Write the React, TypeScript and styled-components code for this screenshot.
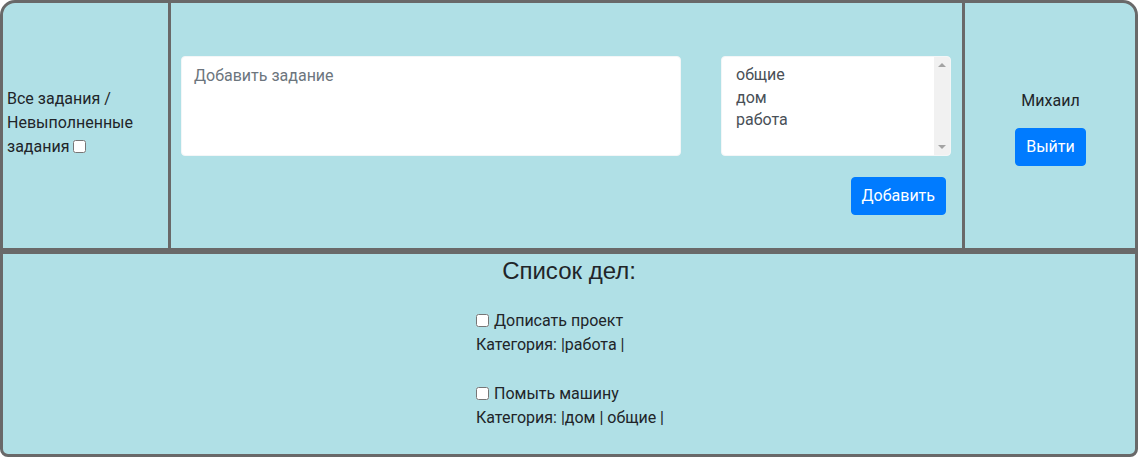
import React from "react";
import styled, { createGlobalStyle } from "styled-components";

const Global = createGlobalStyle`
  html, body { margin: 0; padding: 0; background: #fff; }
  body {
    font-family: Roboto, "Noto Sans", sans-serif;
    font-size: 16px;
    line-height: 1.5;
    color: #212529;
  }
  * { box-sizing: border-box; }
`;

const Page = styled.div`
  width: 1138px;
  display: flex;
  flex-direction: column;
`;

const Header = styled.header`
  display: grid;
  grid-template-columns: 168px 794px 173px;
  height: 251px;
  background: #b0e0e6;
  border: 3px solid #696969;
  border-radius: 15px 15px 0 0;
`;

const Column = styled.div<{ $divider?: boolean }>`
  display: flex;
  border-right: ${(p) => (p.$divider ? "3px solid #696969" : "none")};
`;

const FilterCol = styled(Column)`
  align-items: center;
  padding: 0 0 5px 4px;
`;

const FilterText = styled.label`
  display: block;
`;

const Check = styled.input.attrs({ type: "checkbox" })`
  width: 13px;
  height: 13px;
  margin: 0;
  vertical-align: -1px;
`;

const MiddleCol = styled(Column)`
  flex-direction: column;
  padding-top: 53px;
`;

const InputRow = styled.div`
  display: flex;
  justify-content: space-between;
  padding: 0 11px 0 10px;
`;

const TaskInput = styled.textarea`
  width: 500px;
  height: 100px;
  padding: 7px 12px 6px;
  border: 1px solid #f3f6f7;
  border-radius: 4px;
  background: #fff;
  font: inherit;
  color: #495057;
  resize: none;
  outline: none;
  &::placeholder { color: #6c757d; }
`;

const ListBox = styled.div`
  width: 230px;
  height: 100px;
  display: flex;
  background: #fff;
  border: 1px solid #f3f6f7;
  border-radius: 4px;
  overflow: hidden;
`;

const Options = styled.div`
  flex: 1;
  padding: 7px 0 0 14px;
  color: #495057;
`;

const Option = styled.div`
  line-height: 22.5px;
`;

const ScrollTrack = styled.div`
  width: 16px;
  background: #f1f1f1;
  display: flex;
  flex-direction: column;
  justify-content: space-between;
  align-items: center;
  padding: 6px 0;
`;

const Arrow = styled.span<{ $down?: boolean }>`
  width: 0;
  height: 0;
  border-left: 4px solid transparent;
  border-right: 4px solid transparent;
  ${(p) =>
    p.$down
      ? "border-top: 4px solid #a3a3a3;"
      : "border-bottom: 4px solid #a3a3a3;"}
`;

const ActionRow = styled.div`
  display: flex;
  justify-content: flex-end;
  padding-right: 16px;
  margin-top: 21px;
`;

const Button = styled.button`
  background: #007bff;
  color: #fff;
  border: 1px solid #007bff;
  border-radius: 4px;
  padding: 6px 10px;
  font: inherit;
  line-height: 24px;
  cursor: pointer;
`;

const UserCol = styled(Column)`
  flex-direction: column;
  align-items: center;
  justify-content: center;
  gap: 15px;
  padding: 3px 2px 0 0;
`;

const UserName = styled.div``;

const ListSection = styled.section`
  height: 206px;
  background: #b0e0e6;
  border: 3px solid #696969;
  border-radius: 0 0 8px 8px;
  display: flex;
  flex-direction: column;
  align-items: center;
  padding-top: 3px;
`;

const Title = styled.h4`
  margin: 0;
  font-family: "Liberation Sans", Arial, sans-serif;
  font-weight: 400;
  font-size: 24px;
  line-height: 1.2;
  color: #212529;
`;

const Tasks = styled.div`
  margin-top: 23px;
  display: flex;
  flex-direction: column;
  gap: 25px;
  padding-left: 2px;
`;

const Task = styled.div``;

const TaskTitle = styled.label`
  display: flex;
  align-items: center;
  gap: 5px;
`;

export default function App() {
  return (
    <>
      <Global />
      <Page>
        <Header>
          <FilterCol $divider>
            <FilterText>
              Все задания / Невыполненные задания <Check />
            </FilterText>
          </FilterCol>
          <MiddleCol $divider>
            <InputRow>
              <TaskInput placeholder="Добавить задание" />
              <ListBox role="listbox">
                <Options>
                  <Option>общие</Option>
                  <Option>дом</Option>
                  <Option>работа</Option>
                </Options>
                <ScrollTrack>
                  <Arrow />
                  <Arrow $down />
                </ScrollTrack>
              </ListBox>
            </InputRow>
            <ActionRow>
              <Button>Добавить</Button>
            </ActionRow>
          </MiddleCol>
          <UserCol>
            <UserName>Михаил</UserName>
            <Button>Выйти</Button>
          </UserCol>
        </Header>
        <ListSection>
          <Title>Список дел:</Title>
          <Tasks>
            <Task>
              <TaskTitle>
                <Check />
                Дописать проект
              </TaskTitle>
              <div>Категория: |работа |</div>
            </Task>
            <Task>
              <TaskTitle>
                <Check />
                Помыть машину
              </TaskTitle>
              <div>Категория: |дом | общие |</div>
            </Task>
          </Tasks>
        </ListSection>
      </Page>
    </>
  );
}
